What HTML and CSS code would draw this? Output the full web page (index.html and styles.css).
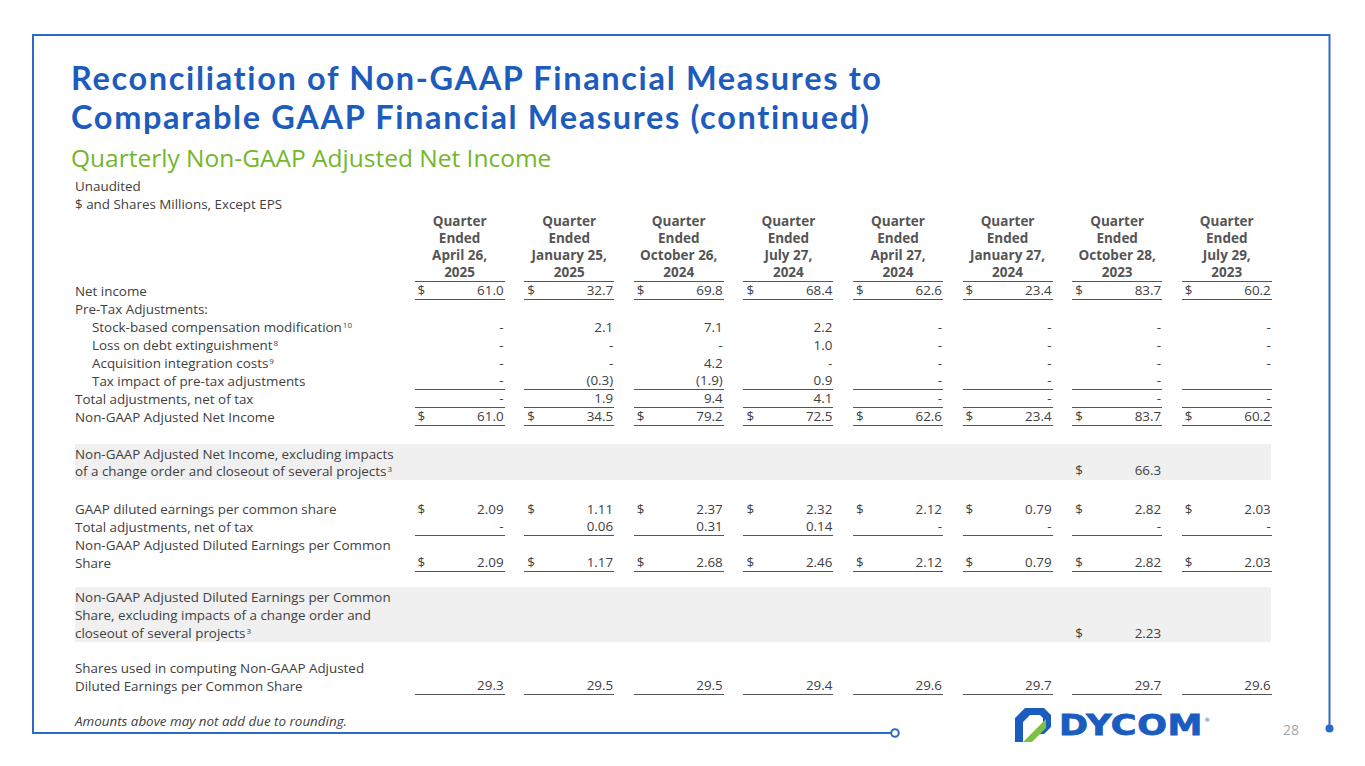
FILE: index.html
```html
<!DOCTYPE html>
<html lang="en">
<head>
<meta charset="utf-8">
<title>Reconciliation of Non-GAAP Financial Measures</title>
<link rel="stylesheet" href="styles.css">
</head>
<body>
<div class="slide">
  <svg class="frame" width="1365" height="766" viewBox="0 0 1365 766" aria-hidden="true">
    <path d="M33 734 V35 H1329.5 V728" fill="none" stroke="#2c6bc5" stroke-width="2"/>
    <path d="M32 733 H891" fill="none" stroke="#2c6bc5" stroke-width="2.2"/>
    <circle cx="895" cy="733" r="3.8" fill="#fff" stroke="#2c6bc5" stroke-width="2"/>
    <circle cx="1329.5" cy="728.5" r="4" fill="#2c6bc5"/>
  </svg>

  <header class="head">
    <h1 class="title"><span class="tl">Reconciliation of Non-GAAP Financial Measures to</span><span class="tl">Comparable GAAP Financial Measures (continued)</span></h1>
    <h2 class="subtitle">Quarterly Non-GAAP Adjusted Net Income</h2>
  </header>

  <section class="table">
    <div class="note">Unaudited</div>
    <div class="note">$ and Shares Millions, Except EPS</div>

    <div class="row hdr">
      <div class="lbl"></div>
      <div class="hc">Quarter<br>Ended<br>April 26,<br>2025</div>
      <div class="hc">Quarter<br>Ended<br>January 25,<br>2025</div>
      <div class="hc">Quarter<br>Ended<br>October 26,<br>2024</div>
      <div class="hc">Quarter<br>Ended<br>July 27,<br>2024</div>
      <div class="hc">Quarter<br>Ended<br>April 27,<br>2024</div>
      <div class="hc">Quarter<br>Ended<br>January 27,<br>2024</div>
      <div class="hc">Quarter<br>Ended<br>October 28,<br>2023</div>
      <div class="hc">Quarter<br>Ended<br>July 29,<br>2023</div>
    </div>

    <div class="row">
      <div class="lbl">Net income</div>
      <div class="c u"><span>$</span><span>61.0</span></div>
      <div class="c u"><span>$</span><span>32.7</span></div>
      <div class="c u"><span>$</span><span>69.8</span></div>
      <div class="c u"><span>$</span><span>68.4</span></div>
      <div class="c u"><span>$</span><span>62.6</span></div>
      <div class="c u"><span>$</span><span>23.4</span></div>
      <div class="c u"><span>$</span><span>83.7</span></div>
      <div class="c u"><span>$</span><span>60.2</span></div>
    </div>
    <div class="row">
      <div class="lbl">Pre-Tax Adjustments:</div>
    </div>
    <div class="row">
      <div class="lbl ind">Stock-based compensation modification<sup>10</sup></div>
      <div class="c"><span></span><span>-</span></div>
      <div class="c"><span></span><span>2.1</span></div>
      <div class="c"><span></span><span>7.1</span></div>
      <div class="c"><span></span><span>2.2</span></div>
      <div class="c"><span></span><span>-</span></div>
      <div class="c"><span></span><span>-</span></div>
      <div class="c"><span></span><span>-</span></div>
      <div class="c"><span></span><span>-</span></div>
    </div>
    <div class="row">
      <div class="lbl ind">Loss on debt extinguishment<sup>8</sup></div>
      <div class="c"><span></span><span>-</span></div>
      <div class="c"><span></span><span>-</span></div>
      <div class="c"><span></span><span>-</span></div>
      <div class="c"><span></span><span>1.0</span></div>
      <div class="c"><span></span><span>-</span></div>
      <div class="c"><span></span><span>-</span></div>
      <div class="c"><span></span><span>-</span></div>
      <div class="c"><span></span><span>-</span></div>
    </div>
    <div class="row">
      <div class="lbl ind">Acquisition integration costs<sup>9</sup></div>
      <div class="c"><span></span><span>-</span></div>
      <div class="c"><span></span><span>-</span></div>
      <div class="c"><span></span><span>4.2</span></div>
      <div class="c"><span></span><span>-</span></div>
      <div class="c"><span></span><span>-</span></div>
      <div class="c"><span></span><span>-</span></div>
      <div class="c"><span></span><span>-</span></div>
      <div class="c"><span></span><span>-</span></div>
    </div>
    <div class="row">
      <div class="lbl ind">Tax impact of pre-tax adjustments</div>
      <div class="c u"><span></span><span>-</span></div>
      <div class="c u"><span></span><span>(0.3)</span></div>
      <div class="c u"><span></span><span>(1.9)</span></div>
      <div class="c u"><span></span><span>0.9</span></div>
      <div class="c u"><span></span><span>-</span></div>
      <div class="c u"><span></span><span>-</span></div>
      <div class="c u"><span></span><span>-</span></div>
      <div class="c u"><span></span><span></span></div>
    </div>
    <div class="row">
      <div class="lbl">Total adjustments, net of tax</div>
      <div class="c u"><span></span><span>-</span></div>
      <div class="c u"><span></span><span>1.9</span></div>
      <div class="c u"><span></span><span>9.4</span></div>
      <div class="c u"><span></span><span>4.1</span></div>
      <div class="c u"><span></span><span>-</span></div>
      <div class="c u"><span></span><span>-</span></div>
      <div class="c u"><span></span><span>-</span></div>
      <div class="c u"><span></span><span>-</span></div>
    </div>
    <div class="row">
      <div class="lbl">Non-GAAP Adjusted Net Income</div>
      <div class="c u"><span>$</span><span>61.0</span></div>
      <div class="c u"><span>$</span><span>34.5</span></div>
      <div class="c u"><span>$</span><span>79.2</span></div>
      <div class="c u"><span>$</span><span>72.5</span></div>
      <div class="c u"><span>$</span><span>62.6</span></div>
      <div class="c u"><span>$</span><span>23.4</span></div>
      <div class="c u"><span>$</span><span>83.7</span></div>
      <div class="c u"><span>$</span><span>60.2</span></div>
    </div>

    <div class="row band band1">
      <div class="lbl">Non-GAAP Adjusted Net Income, excluding impacts<br>of a change order and closeout of several projects<sup>3</sup></div>
      <div class="c"></div><div class="c"></div><div class="c"></div><div class="c"></div>
      <div class="c"></div><div class="c"></div>
      <div class="c"><span>$</span><span>66.3</span></div>
      <div class="c"></div>
    </div>

    <div class="row gap2">
      <div class="lbl">GAAP diluted earnings per common share</div>
      <div class="c"><span>$</span><span>2.09</span></div>
      <div class="c"><span>$</span><span>1.11</span></div>
      <div class="c"><span>$</span><span>2.37</span></div>
      <div class="c"><span>$</span><span>2.32</span></div>
      <div class="c"><span>$</span><span>2.12</span></div>
      <div class="c"><span>$</span><span>0.79</span></div>
      <div class="c"><span>$</span><span>2.82</span></div>
      <div class="c"><span>$</span><span>2.03</span></div>
    </div>
    <div class="row">
      <div class="lbl">Total adjustments, net of tax</div>
      <div class="c u"><span></span><span>-</span></div>
      <div class="c u"><span></span><span>0.06</span></div>
      <div class="c u"><span></span><span>0.31</span></div>
      <div class="c u"><span></span><span>0.14</span></div>
      <div class="c u"><span></span><span>-</span></div>
      <div class="c u"><span></span><span>-</span></div>
      <div class="c u"><span></span><span>-</span></div>
      <div class="c u"><span></span><span>-</span></div>
    </div>
    <div class="row">
      <div class="lbl">Non-GAAP Adjusted Diluted Earnings per Common<br>Share</div>
      <div class="c u"><span>$</span><span>2.09</span></div>
      <div class="c u"><span>$</span><span>1.17</span></div>
      <div class="c u"><span>$</span><span>2.68</span></div>
      <div class="c u"><span>$</span><span>2.46</span></div>
      <div class="c u"><span>$</span><span>2.12</span></div>
      <div class="c u"><span>$</span><span>0.79</span></div>
      <div class="c u"><span>$</span><span>2.82</span></div>
      <div class="c u"><span>$</span><span>2.03</span></div>
    </div>

    <div class="row band band2">
      <div class="lbl">Non-GAAP Adjusted Diluted Earnings per Common<br>Share, excluding impacts of a change order and<br>closeout of several projects<sup>3</sup></div>
      <div class="c"></div><div class="c"></div><div class="c"></div><div class="c"></div>
      <div class="c"></div><div class="c"></div>
      <div class="c"><span>$</span><span>2.23</span></div>
      <div class="c"></div>
    </div>

    <div class="row gap3">
      <div class="lbl">Shares used in computing Non-GAAP Adjusted<br>Diluted Earnings per Common Share</div>
      <div class="c u"><span></span><span>29.3</span></div>
      <div class="c u"><span></span><span>29.5</span></div>
      <div class="c u"><span></span><span>29.5</span></div>
      <div class="c u"><span></span><span>29.4</span></div>
      <div class="c u"><span></span><span>29.6</span></div>
      <div class="c u"><span></span><span>29.7</span></div>
      <div class="c u"><span></span><span>29.7</span></div>
      <div class="c u"><span></span><span>29.6</span></div>
    </div>

    <div class="foot">Amounts above may not add due to rounding.</div>
  </section>

  <div class="logo">
    <svg class="logo-mark" width="36" height="34" viewBox="0 0 36 34" aria-hidden="true">
      <path d="M10 0 H29 L36 7 V19 L29 26 H21 L28 19 V10 L25 7 H15 L8 14 V34 H0 V10 Z" fill="#1a5cbf"/>
      <path d="M8 34 L31 11 V20 L17 34 Z" fill="#7cc242"/>
    </svg>
    <span class="logo-text">DYCOM</span><span class="reg">®</span>
  </div>
  <div class="pageno">28</div>
</div>
</body>
</html>
```

FILE: styles.css
```css
* { box-sizing: border-box; }
html, body { margin: 0; padding: 0; background: #fff; }
body { font-family: "Open Sans", "Noto Sans", sans-serif; color: #404040; }

.slide {
  position: relative;
  width: 1365px;
  height: 766px;
  overflow: hidden;
  padding: 58px 0 0 71px;
}

.frame { position: absolute; left: 0; top: 0; pointer-events: none; }

.head { margin: 0; }
.title {
  margin: 0;
  font-family: Lato, "Open Sans", sans-serif;
  font-size: 32.5px;
  line-height: 39px;
  font-weight: 700;
  color: #1d5cbd;
  letter-spacing: 1.65px;
}
.tl { display: block; white-space: nowrap; height: 39px; }
.subtitle {
  margin: 8px 0 0;
  font-size: 24.5px;
  line-height: 28px;
  font-weight: 400;
  color: #74b62c;
}

.table { margin: 5px 0 0 4px; font-size: 13.4px; }
.note { line-height: 18px; }

.row {
  display: grid;
  grid-template-columns: 320px repeat(8, 90px);
  column-gap: 19.6px;
  line-height: 18px;
  width: 1196px;
}
.lbl { white-space: nowrap; }
.ind { padding-left: 17px; }
sup { font-size: 8px; line-height: 0; vertical-align: 4px; margin-left: 1px; }

.hdr { font-weight: 700; color: #555; line-height: 17px; font-size: 13.5px; }
.hdr .hc { text-align: center; border-bottom: 1px solid #555; white-space: nowrap; }

.c {
  display: flex;
  justify-content: space-between;
  align-self: end;
  padding: 0 1px 0 3px;
  height: 18px;
}
.u { border-bottom: 1px solid #555; line-height: 17px; }

.band { background: #f0f0f0; margin-top: 18px; }
.band1 { line-height: 17px; padding-top: 2px; height: 36px; }
.band2 { line-height: 18px; padding-top: 1px; height: 55px; margin-top: 15px; }
.band .c { height: 18px; }
.gap2 { margin-top: 20px; }
.gap3 { margin-top: 17px; }

.foot { font-style: italic; line-height: 18px; margin-top: 17px; }

.logo {
  position: absolute;
  left: 1015px;
  top: 708px;
  display: flex;
  align-items: flex-start;
}
.logo-mark { display: block; }
.logo-text {
  display: inline-block;
  margin-left: 8px;
  margin-top: 3px;
  font-family: "DejaVu Sans", sans-serif;
  font-weight: 700;
  font-size: 28px;
  line-height: 30px;
  color: #1a5cbf;
  transform: scaleX(1.25);
  transform-origin: left center;
  -webkit-text-stroke: 0.8px #1a5cbf;
  letter-spacing: 0.5px;
}
.reg {
  font-family: "DejaVu Sans", sans-serif;
  font-size: 6px;
  color: #1a5cbf;
  margin-left: 30px;
  margin-top: 8px;
}
.pageno {
  position: absolute;
  left: 1283px;
  top: 721px;
  font-size: 14px;
  line-height: 18px;
  color: #a6a6a6;
}
```
